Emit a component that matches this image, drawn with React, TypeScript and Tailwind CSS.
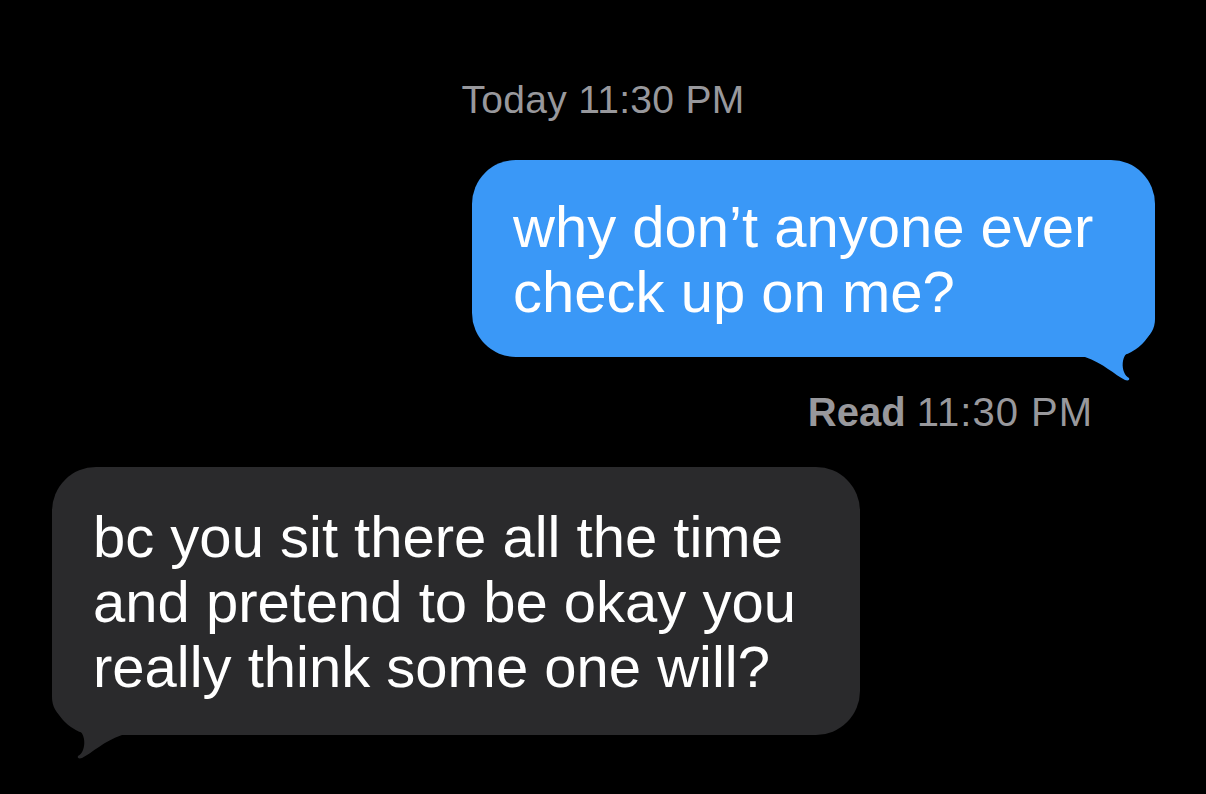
const BLUE = '#3a98f7'
const GRAY = '#2a2a2c'

function Tail({ color, flip }: { color: string; flip?: boolean }) {
  // tail drawn with the bubble's right edge at x=70 and bottom edge at y=50
  return (
    <svg
      viewBox="0 0 75 75"
      className={
        flip
          ? 'absolute -left-[5px] -bottom-[25px] h-[75px] w-[75px] -scale-x-100'
          : 'absolute -right-[5px] -bottom-[25px] h-[75px] w-[75px]'
      }
    >
      <path
        d="M0 50 L0 0 L70 0 L70 12 C70 32 50 38 41 47 C37 52 37 60 39 65 C40 68 42 70 44 71 C45 73 43 74 40 73 C30 68 18 56 0 50 Z"
        fill={color}
      />
    </svg>
  )
}

export default function App() {
  return (
    <main className="min-h-screen w-full bg-black flex flex-col font-['Liberation_Sans',Arial,sans-serif]">
      {/* timestamp */}
      <div className="pt-[78px] text-center text-[39px] leading-[44px] tracking-[0.3px] text-[#98989c]">
        Today 11:30 PM
      </div>

      {/* sent */}
      <div className="mt-[38px] flex justify-end pr-[51px]">
        <div
          className="relative w-[683px] rounded-[44px] pl-[41px] pt-[34px] pb-[33px] text-[58px] leading-[65px] text-white whitespace-nowrap"
          style={{ backgroundColor: BLUE }}
        >
          <p className="relative z-10">why don’t anyone ever</p>
          <p className="relative z-10">check up on me?</p>
          <Tail color={BLUE} />
        </div>
      </div>

      <div className="mt-[33px] flex justify-end pr-[113px] text-[40px] leading-[44px] text-[#98989c]">
        <span>
          <span className="font-bold">Read</span>{' '}
          <span className="tracking-[1px]">11:30 PM</span>
        </span>
      </div>

      {/* received */}
      <div className="mt-[33px] pl-[52px]">
        <div className="relative w-[808px] rounded-[44px] bg-[#2a2a2c] pl-[41px] pt-[37px] pb-[36px] text-[58px] leading-[65px] text-white whitespace-nowrap">
          <p className="relative z-10">bc you sit there all the time</p>
          <p className="relative z-10">and pretend to be okay you</p>
          <p className="relative z-10">really think some one will?</p>
          <Tail color={GRAY} flip />
        </div>
      </div>
    </main>
  )
}
